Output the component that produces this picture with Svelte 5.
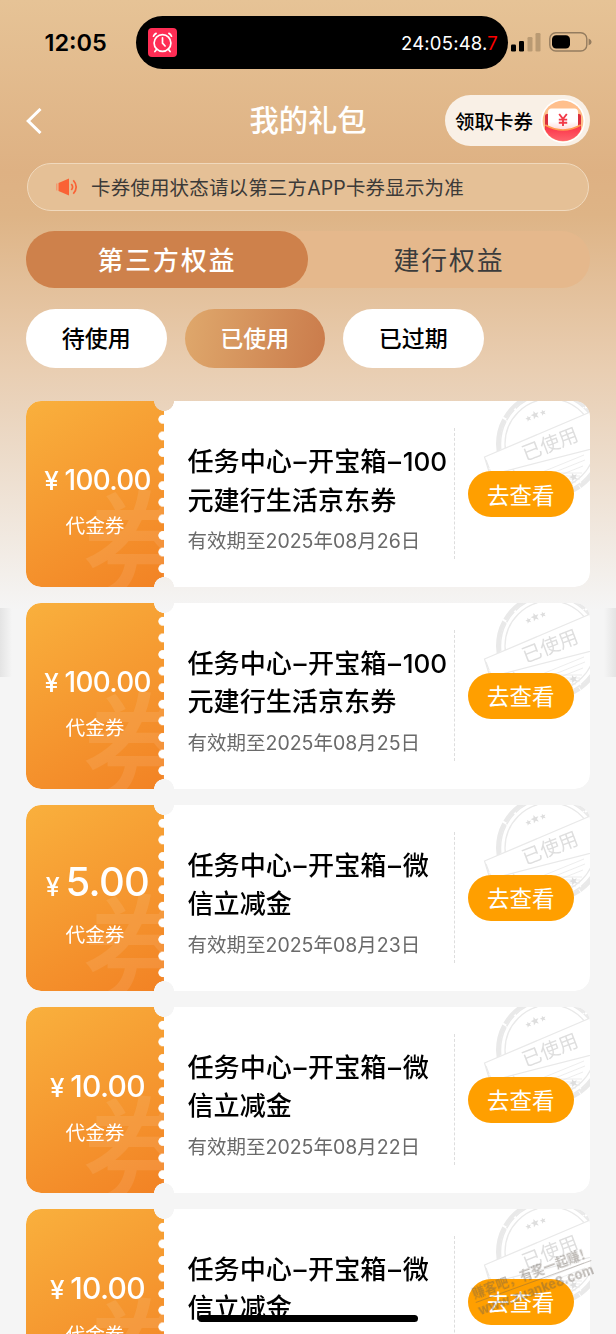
<script>
  /**
   * Gift bag page: benefit tabs, status filters and the list of used coupons.
   */

  const filters = ['待使用', '已使用', '已过期'];
  let activeFilter = $state('已使用');

  const tabs = ['第三方权益', '建行权益'];
  let activeTab = $state('第三方权益');

  const coupons = [
    { id: 1, amount: '100.00', size: 'small', title: ['任务中心–开宝箱–100', '元建行生活京东券'], date: '2025年08月26日' },
    { id: 2, amount: '100.00', size: 'small', title: ['任务中心–开宝箱–100', '元建行生活京东券'], date: '2025年08月25日' },
    { id: 3, amount: '5.00', size: 'large', title: ['任务中心–开宝箱–微', '信立减金'], date: '2025年08月23日' },
    { id: 4, amount: '10.00', size: 'medium', title: ['任务中心–开宝箱–微', '信立减金'], date: '2025年08月22日' },
    { id: 5, amount: '10.00', size: 'medium', title: ['任务中心–开宝箱–微', '信立减金'], date: '2025年08月22日' }
  ];
</script>

{#snippet star(x, y, s)}
  <path
    transform="translate({x} {y}) rotate(-22) scale({s})"
    d="M0-3 .8-1 3-1 1.3.5 1.9 2.7 0 1.4-1.9 2.7-1.3.5-3-1-.8-1z"
  />
{/snippet}

<div class="page">
  <div class="edge edge-left"></div>
  <div class="edge edge-right"></div>

  <div class="status-bar">
    <span class="clock">12:05</span>
    <div class="island">
      <svg class="alarm" viewBox="0 0 29 29" width="29" height="29">
        <rect width="29" height="29" rx="4" fill="#ff2d55" />
        <g fill="none" stroke="#fff" stroke-width="1.7" stroke-linecap="round">
          <circle cx="14.5" cy="15" r="8.4" />
          <path d="M14.5 9.8v5.400l2.600 2.800M5.500 8.200q.8-2 2.600-2.800M23.500 8.200q-.8-2-2.600-2.800M8.700 21.200l-1.800 2.300M20.300 21.200l1.800 2.300" />
        </g>
      </svg>
      <span class="timer">24:05:48.<em>7</em></span>
    </div>
    <svg class="signal" viewBox="0 0 30 20" width="30" height="20">
      <rect x="0" y="11.5" width="5" height="7" rx="1.3" />
      <rect x="8" y="8" width="5" height="10.5" rx="1.3" />
      <g fill="#b99a73">
        <rect x="16.5" y="4" width="5" height="14.5" rx="1.3" />
        <rect x="24.5" y="0" width="5" height="18.5" rx="1.3" />
      </g>
    </svg>
    <svg class="battery" viewBox="0 0 43 20" width="43" height="20">
      <rect x=".8" y=".8" width="37" height="18.2" rx="6" fill="none" stroke="#947c5f" stroke-width="1.4" />
      <rect x="3" y="3.200" width="18" height="13.400" rx="4.2" />
      <path d="M39.6 6.5q3 1.2 3 3.4t-3 3.4z" fill="#947c5f" />
    </svg>
  </div>

  <header class="nav">
    <button class="back" aria-label="返回">
      <svg viewBox="0 0 16 26" width="16" height="26">
        <path d="M14.5 1 2.2 13l12.3 12" fill="none" stroke="#fff" stroke-width="3" />
      </svg>
    </button>
    <h1>我的礼包</h1>
    <button class="claim">
      <span>领取卡券</span>
      <svg viewBox="0 0 44 44" width="44" height="44">
        <defs>
          <linearGradient id="pocket" x1="0" y1="0" x2="0" y2="1">
            <stop offset="0" stop-color="#fb2f45" />
            <stop offset="1" stop-color="#ff6a72" />
          </linearGradient>
          <linearGradient id="slip" x1="0" y1="0" x2="0" y2="1">
            <stop offset=".6" stop-color="#fff" />
            <stop offset="1" stop-color="#ffd3d3" />
          </linearGradient>
          <clipPath id="disc"><circle cx="22" cy="22" r="20" /></clipPath>
        </defs>
        <circle cx="22" cy="22" r="22" fill="#fff" />
        <circle cx="22" cy="22" r="20.4" fill="#ffbf8c" />
        <g clip-path="url(#disc)">
          <path d="M4 17q0-2 2-2h32q2 0 2 2v14H4z" fill="#d92e3c" />
          <rect x="7" y="9.5" width="30" height="22" rx="3.5" fill="url(#slip)" />
          <path d="M4.3 26q17.7 10 35.4 0v18H4.3z" fill="url(#pocket)" />
          <path d="M4.3 26q17.700 10 35.4 0" fill="none" stroke="#ff9c50" stroke-width="1.5" />
        </g>
        <path d="m18.2 15 3.8 5 3.8-5M22 20v7M17.800 20.6h8.4M17.8 23.7h8.4" fill="none" stroke="#f23a48" stroke-width="1.9" />
      </svg>
    </button>
  </header>

  <div class="notice">
    <svg viewBox="0 0 22 18" width="22" height="18">
      <path d="M0 5.5h1.5v7H0z" fill="#f3996f" />
      <path d="M2.5 5 13 .4v17.200L2.5 13z" fill="#fa6235" />
      <path d="M15.3 6q2.600 3 0 6M17.3 2.3q5.8 6.7 0 13.4" fill="none" stroke="#fa6235" stroke-width="1.7" />
    </svg>
    <span>卡券使用状态请以第三方APP卡券显示为准</span>
  </div>

  <div class="tabs">
    {#each tabs as tab}
      <button class="tab" class:active={tab === activeTab} onclick={() => (activeTab = tab)}>{tab}</button>
    {/each}
  </div>

  <div class="filters">
    {#each filters as filter}
      <button class="filter" class:active={filter === activeFilter} onclick={() => (activeFilter = filter)}>
        {filter}
      </button>
    {/each}
  </div>

  <div class="coupons">
    {#each coupons as coupon (coupon.id)}
      <article class="coupon">
        <div class="face">
          <span class="ghost" aria-hidden="true">券</span>
          <p class="amount {coupon.size}"><span class="yen">¥</span>{coupon.amount}</p>
          <p class="kind">代金券</p>
        </div>

        <div class="info">
          <h2>
            {#each coupon.title as line}
              <span class="line">
                {#each line.split('–') as part, i}{#if i > 0}<span class="dash">–</span>{/if}{part}{/each}
              </span>
            {/each}
          </h2>
          <p class="date">有效期至{coupon.date}</p>
        </div>

        <div class="action">
          <svg class="stamp" viewBox="0 0 110 110" width="110" height="110">
            <g fill="none" stroke="#e9e9e9">
              <circle cx="67" cy="43" r="52" stroke-width="4" stroke-dasharray="31 1.5 17 .8 43 2" />
              <circle cx="67" cy="43" r="49.5" stroke-width="1.5" stroke-dasharray="13 2 29 1" />
              <circle cx="67" cy="43" r="45" stroke-width="1.3" />
              <path d="M48 72h51M50 75h47M54 78h43M59 81h34M64 84h26M47 76l54-22M52 79l50-20M60 81l40-16" stroke-width=".8" />
            </g>
            <g fill="#dedede">
              {@render star(45.5, 17.5, 1)}
              {@render star(52, 14, 1.4)}
              {@render star(60, 11.5, 1)}
              {@render star(90.5, 76, 1.4)}
            </g>
            <path d="M1.500 56 112 9v38L7 74z" fill="#fff" stroke="#e9e9e9" stroke-width="1.2" />
            <path d="M3 59l5 13" fill="none" stroke="#e9e9e9" stroke-width="1.2" stroke-dasharray="9 1 3 1" />
            <text x="67" y="50" text-anchor="middle" transform="rotate(-21 67 43)">已使用</text>
          </svg>
          <button class="view">去查看</button>
        </div>
      </article>
    {/each}
  </div>

  <div class="watermark" aria-hidden="true">
    <span class="slogan">赚客吧，有奖一起赚！</span>
    <span class="site">www.zuanke8.com</span>
  </div>
  <div class="home-indicator"></div>
</div>

<style>
  :global(body) {
    margin: 0;
    background: #f5f5f5;
  }

  .page {
    position: relative;
    box-sizing: border-box;
    width: 616px;
    height: 1334px;
    overflow: hidden;
    font-family: Inter, 'Noto Sans CJK SC', sans-serif;
    color: #000;
    background: linear-gradient(
      180deg,
      #e6c396 0,
      #deb183 172px,
      #deb486 215px,
      #e9ceb2 370px,
      #ead4bd 410px,
      #f5f5f5 610px
    );
  }

  button {
    padding: 0;
    border: 0;
    background: none;
    font: inherit;
    color: inherit;
  }

  h1,
  h2,
  p {
    margin: 0;
    font-weight: 400;
  }

  svg {
    display: block;
    flex-shrink: 0;
  }

  /* Soft shadows at both screen edges */
  .edge {
    position: absolute;
    top: 608px;
    width: 12px;
    height: 69px;
  }

  .edge-left {
    left: 0;
    background: linear-gradient(90deg, #e4e4e4, #f5f5f5);
  }

  .edge-right {
    right: 0;
    background: linear-gradient(270deg, #e4e4e4, #f5f5f5);
  }

  .status-bar {
    display: flex;
    align-items: center;
    height: 53px;
    padding: 16px 0 0 44.5px;
  }

  .clock {
    width: 91px;
    font-size: 23.5px;
    font-weight: 600;
  }

  .island {
    display: flex;
    align-items: center;
    justify-content: space-between;
    box-sizing: border-box;
    width: 372.5px;
    height: 53px;
    padding: 0 10px 0 12.5px;
    border-radius: 27px;
    background: #000;
  }

  .timer {
    font-size: 18.5px;
    letter-spacing: 0.2px;
    color: #fff;
  }

  .timer em {
    font-style: normal;
    color: #f00;
  }

  .signal {
    margin-left: 2.5px;
  }

  .battery {
    margin: -2px 0 0 8.5px;
  }

  .nav {
    display: grid;
    grid-template-columns: 1fr 120px 1fr;
    align-items: center;
    height: 51px;
    padding: 26px 26px 0;
  }

  .back {
    justify-self: start;
  }

  h1 {
    font-size: 29.3px;
    line-height: 50px;
    font-weight: 500;
    text-align: center;
    white-space: nowrap;
    color: #fff;
  }

  .claim {
    display: flex;
    align-items: center;
    justify-content: space-between;
    justify-self: end;
    box-sizing: border-box;
    width: 145px;
    height: 51px;
    padding: 0 5px 0 10px;
    border-radius: 26px;
    background: #f9f0e6;
    font-size: 19.5px;
    font-weight: 500;
  }

  .notice {
    display: flex;
    align-items: center;
    gap: 13px;
    box-sizing: border-box;
    height: 48px;
    margin: 17px 27px 0;
    padding-left: 28px;
    border: 1.5px solid #f0d9bd;
    border-radius: 25px;
    background: #e5c096;
    font-size: 19.5px;
    letter-spacing: 0.15px;
    color: #3c3a38;
  }

  .notice span {
    padding-bottom: 1px;
  }

  .tabs {
    display: flex;
    height: 57px;
    margin: 20px 26px 0;
    border-radius: 29px;
    background: #e5b88c;
  }

  .tab {
    flex: 1;
    padding-bottom: 3px;
    border-radius: 29px;
    font-size: 25.8px;
    letter-spacing: 2px;
    color: #3b3b3b;
  }

  .tab.active {
    background: #ce814b;
    font-weight: 500;
    color: #fff;
  }

  .filters {
    display: flex;
    gap: 18px;
    margin: 21px 26px 0;
  }

  .filter {
    width: 140.5px;
    height: 59px;
    padding-bottom: 3px;
    border-radius: 30px;
    background: #fff;
    font-size: 23px;
    font-weight: 500;
  }

  .filter.active {
    background: linear-gradient(100deg, #dfa86c, #ca7b4b);
    color: #fff;
  }

  .coupons {
    display: flex;
    flex-direction: column;
    gap: 16.2px;
    margin: 33px 26px 0;
  }

  /* Ticket outline: a round notch cut from the top and bottom of the seam */
  .coupon {
    display: flex;
    position: relative;
    flex-shrink: 0;
    height: 185.8px;
    border-radius: 15px;
    overflow: hidden;
    background: #fff;
    mask:
      radial-gradient(circle at 138px 0, transparent 9.6px, #000 10.2px),
      radial-gradient(circle at 138px 100%, transparent 9.6px, #000 10.2px);
    mask-composite: intersect;
  }

  .face {
    position: relative;
    display: flex;
    flex-direction: column;
    align-items: center;
    justify-content: center;
    box-sizing: border-box;
    width: 138px;
    padding-top: 18px;
    overflow: hidden;
    background: linear-gradient(150deg, #f9b03d, #f28224);
    color: #fff;
  }

  /* Perforation dots */
  .face::after {
    content: '';
    position: absolute;
    top: 10px;
    right: 0;
    width: 6px;
    height: 166px;
    background: radial-gradient(circle at 4.7px 8.3px, #fff 4px, transparent 4.7px) 0 0 / 6px 16.6px;
  }

  .ghost {
    position: absolute;
    top: 79px;
    left: 56px;
    font-family: 'Noto Sans CJK SC', sans-serif;
    font-size: 120px;
    line-height: 120px;
    font-weight: 500;
    color: rgba(255, 255, 255, 0.09);
  }

  .amount {
    position: relative;
    padding-left: 5px;
    letter-spacing: -0.7px;
    font-weight: 500;
    white-space: nowrap;
  }

  .yen {
    margin-right: 6.5px;
    font-size: 26px;
  }

  .amount.small {
    font-size: 27.8px;
    line-height: 46px;
  }

  .amount.medium {
    font-size: 30px;
    line-height: 47px;
  }

  .amount.large {
    font-size: 40px;
    line-height: 52px;
  }

  .amount.large .yen {
    font-size: 25px;
  }

  .kind {
    position: relative;
    font-size: 19.7px;
    line-height: 44px;
  }

  .info {
    box-sizing: border-box;
    width: 291px;
    padding: 42px 0 0 23.5px;
    white-space: nowrap;
  }

  h2 {
    font-size: 26.1px;
    font-weight: 500;
    line-height: 38.5px;
  }

  .line {
    display: block;
  }

  .dash {
    display: inline-block;
    margin: 0 1.6px;
  }

  .date {
    margin-top: 4px;
    font-size: 19.5px;
    line-height: 34px;
    color: #6a6a6a;
  }

  .action {
    position: relative;
    flex: 1;
  }

  .action::before {
    content: '';
    position: absolute;
    top: 27px;
    left: -1px;
    height: 131px;
    border-left: 1.5px dashed #ddd;
  }

  .stamp {
    position: absolute;
    top: 0;
    right: -3px;
  }

  .stamp text {
    font-size: 19.5px;
    fill: #dedede;
  }

  .view {
    position: relative;
    width: 106.5px;
    height: 46px;
    margin: 70px 0 0 12.5px;
    padding-bottom: 1px;
    border-radius: 23px;
    background: #ff9f00;
    font-size: 22.5px;
    color: #fff;
  }

  .watermark {
    position: absolute;
    top: 1264px;
    left: 472px;
    display: flex;
    flex-direction: column;
    width: 123px;
    transform: rotate(-20deg);
    font-weight: 700;
    white-space: nowrap;
    color: rgba(100, 90, 80, 0.42);
  }

  .slogan {
    border-bottom: 1px solid rgba(100, 90, 80, 0.35);
    font-size: 12.6px;
    line-height: 17px;
  }

  .site {
    font-size: 12.9px;
    line-height: 17px;
  }

  .home-indicator {
    position: absolute;
    bottom: 12px;
    left: 198px;
    width: 220px;
    height: 7px;
    border-radius: 4px;
    background: #000;
  }
</style>
